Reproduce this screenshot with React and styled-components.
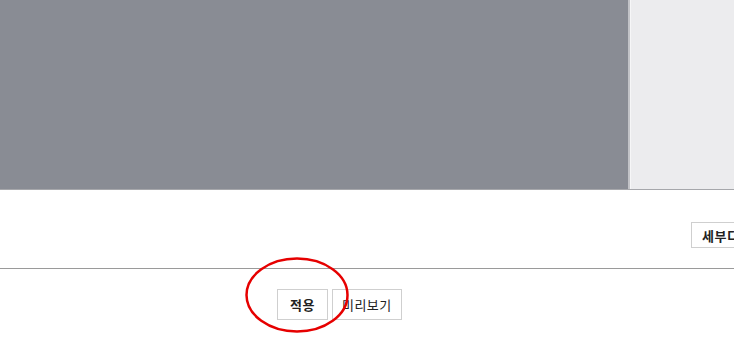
import React from "react";
import styled, { createGlobalStyle } from "styled-components";

const Global = createGlobalStyle`
  html, body { margin: 0; padding: 0; overflow: hidden; background: #fff; }
  body { font-family: "Noto Sans CJK KR", "Noto Sans", sans-serif; }
`;

const Page = styled.div`
  position: relative;
  width: 734px;
  height: 340px;
  overflow: hidden;
`;

const Top = styled.div`
  display: flex;
  height: 189px;
  border-bottom: 1px solid #a6a7ab;
`;

const Canvas = styled.div`
  width: 628px;
  background: #898c94;
`;

const Divider = styled.div`
  width: 2px;
  background: #c2c3c7;
  border-right: 1px solid #f6f6f7;
`;

const Side = styled.div`
  flex: 1;
  background: #ececee;
`;

const Middle = styled.div`
  display: flex;
  height: 79px;
  padding: 32px 0 0 691px;
  box-sizing: border-box;
  border-bottom: 1px solid #9a9a9a;
  overflow: hidden;
`;

const Button = styled.button`
  flex: none;
  height: ${(p) => p.$h || 31}px;
  padding: 0 ${(p) => p.$px || 10}px;
  background: #fff;
  border: 1px solid #cfcfcf;
  border-radius: 0;
  font-family: "Noto Sans CJK KR", "Noto Sans", sans-serif;
  font-size: 13px;
  letter-spacing: 0.5px;
  font-weight: ${(p) => (p.$bold ? 700 : 400)};
  color: #222;
  white-space: nowrap;
  cursor: pointer;
`;

const Bottom = styled.div`
  display: flex;
  gap: 4px;
  padding: 20px 0 0 277px;
`;

const Ellipse = styled.svg`
  position: absolute;
  left: 244px;
  top: 256px;
  width: 106px;
  height: 80px;
  pointer-events: none;
`;

export default function App() {
  return (
    <>
      <Global />
      <Page>
        <Top>
          <Canvas />
          <Divider />
          <Side />
        </Top>
        <Middle>
          <Button $bold $h={26} $px={10}>세부디자인</Button>
        </Middle>
        <Bottom>
          <Button $bold $px={12}>적용</Button>
          <Button $px={9}>미리보기</Button>
        </Bottom>
        <Ellipse viewBox="0 0 106 80">
          <ellipse cx="53" cy="39" rx="50.5" ry="36.5" fill="none" stroke="#e60000" strokeWidth="2.5" />
        </Ellipse>
      </Page>
    </>
  );
}
